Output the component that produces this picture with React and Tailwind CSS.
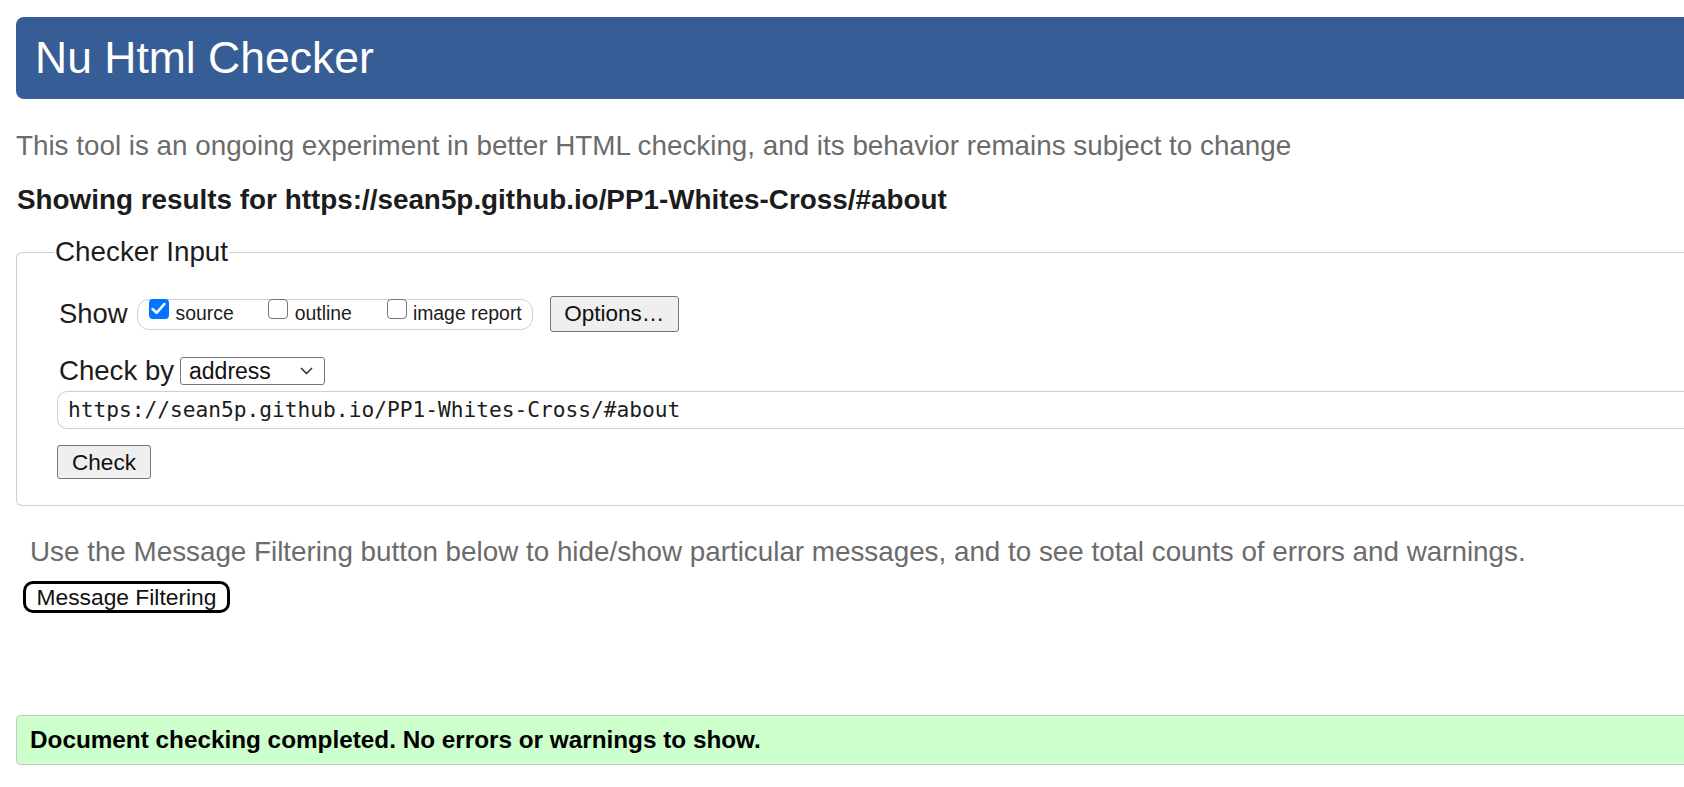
import React from "react";

const sans = { fontFamily: '"Liberation Sans", Arial, sans-serif' };

function Checkbox({ checked }) {
  if (checked) {
    return (
      <span className="-mt-[1px] flex h-[20px] w-[20px] shrink-0 items-center justify-center self-start rounded-[4px] bg-[#0075ff]">
        <svg width="15" height="13" viewBox="0 0 14 12" fill="none">
          <path d="M1.5 6.5 L5.2 10 L12.5 1.8" stroke="white" strokeWidth="2.4" strokeLinecap="round" strokeLinejoin="round" />
        </svg>
      </span>
    );
  }
  return (
    <span className="-mt-[1px] h-[20px] w-[20px] shrink-0 self-start rounded-[4px] border-[1.5px] border-[#767676] bg-white" />
  );
}

export default function App() {
  return (
    <div className="w-full overflow-hidden bg-white" style={sans}>
      <div className="w-[1780px] px-[16px] pt-[17px] pb-[22px]">
        {/* Header */}
        <div className="flex h-[82px] items-center rounded-l-[8px] bg-[#365d95] pl-[19px]">
          <h1 className="text-[44.5px] leading-none text-white">Nu Html Checker</h1>
        </div>

        <p className="mt-[31px] text-[27.8px] leading-[32px] text-[#6b6b6b]">
          This tool is an ongoing experiment in better HTML checking, and its behavior remains subject to change
        </p>

        <h2 className="ml-[1px] mt-[22px] text-[27.85px] font-bold leading-[32px] text-[#1c1c1c]">
          Showing results for https://sean5p.github.io/PP1-Whites-Cross/#about
        </h2>

        {/* Checker Input */}
        <fieldset className="mt-[20px] rounded-l-[6px] border border-r-0 border-[#cfcfcf] pb-[26px] pl-[40px]">
          <legend className="-ml-[3px] px-[1px] text-[27.8px] leading-[32px] text-[#1c1c1c]">Checker Input</legend>

          <div className="mt-[28px] flex h-[36px] items-center">
            <span className="ml-[2px] text-[27.4px] leading-none text-[#1c1c1c]">Show</span>
            <div className="ml-[9px] flex h-[31px] items-center rounded-[12px] border border-[#cfcfcf] pl-[11px] pr-[10px] text-[19.4px] text-[#1c1c1c]">
              <Checkbox checked />
              <span className="ml-[7px]">source</span>
              <span className="ml-[34px]" />
              <Checkbox />
              <span className="ml-[7px]">outline</span>
              <span className="ml-[35px]" />
              <Checkbox />
              <span className="ml-[6px]">image report</span>
            </div>
            <button className="ml-[17px] h-[36px] w-[129px] rounded-[3px] border border-[#767676] bg-[#efefef] text-[22.5px] text-[#111]">
              Options…
            </button>
          </div>

          <div className="mt-[23px] flex h-[32px] items-center">
            <span className="ml-[2px] text-[27.6px] leading-none text-[#1c1c1c]">Check by</span>
            <div className="ml-[6px] flex h-[28px] w-[145px] items-center justify-between rounded-[3px] border border-[#767676] bg-white pl-[8px] pr-[11px]">
              <span className="text-[23px] leading-none text-[#111]">address</span>
              <svg width="13" height="8" viewBox="0 0 13 8" fill="none">
                <path d="M1 1 L6.5 6.5 L12 1" stroke="#222" strokeWidth="1.4" />
              </svg>
            </div>
          </div>

          <div className="mt-[4px] flex h-[38px] items-center rounded-l-[10px] border border-r-0 border-[#cfcfcf] pl-[10px]">
            <span
              className="text-[21.2px] leading-none text-[#1c1c1c]"
              style={{ fontFamily: '"DejaVu Sans Mono", "Liberation Mono", monospace' }}
            >
              https://sean5p.github.io/PP1-Whites-Cross/#about
            </span>
          </div>

          <button className="mt-[16px] h-[34px] w-[94px] rounded-[3px] border border-[#767676] bg-[#efefef] text-[22.6px] text-[#111]">
            Check
          </button>
        </fieldset>

        <p className="ml-[14px] mt-[30px] text-[27.8px] leading-[32px] text-[#6b6b6b]">
          Use the Message Filtering button below to hide/show particular messages, and to see total counts of errors and warnings.
        </p>

        <button className="ml-[7px] mt-[13px] h-[32px] w-[207px] rounded-[10px] border-[3px] border-black bg-white text-[22.8px] leading-none text-[#111]">
          Message Filtering
        </button>

        <div className="mt-[102px] flex h-[50px] items-center rounded-l-[5px] border border-r-0 border-[#c8c8c8] bg-[#ccffcc] pl-[13px]">
          <span className="text-[24.3px] font-bold leading-none text-black">
            Document checking completed. No errors or warnings to show.
          </span>
        </div>
      </div>
    </div>
  );
}
